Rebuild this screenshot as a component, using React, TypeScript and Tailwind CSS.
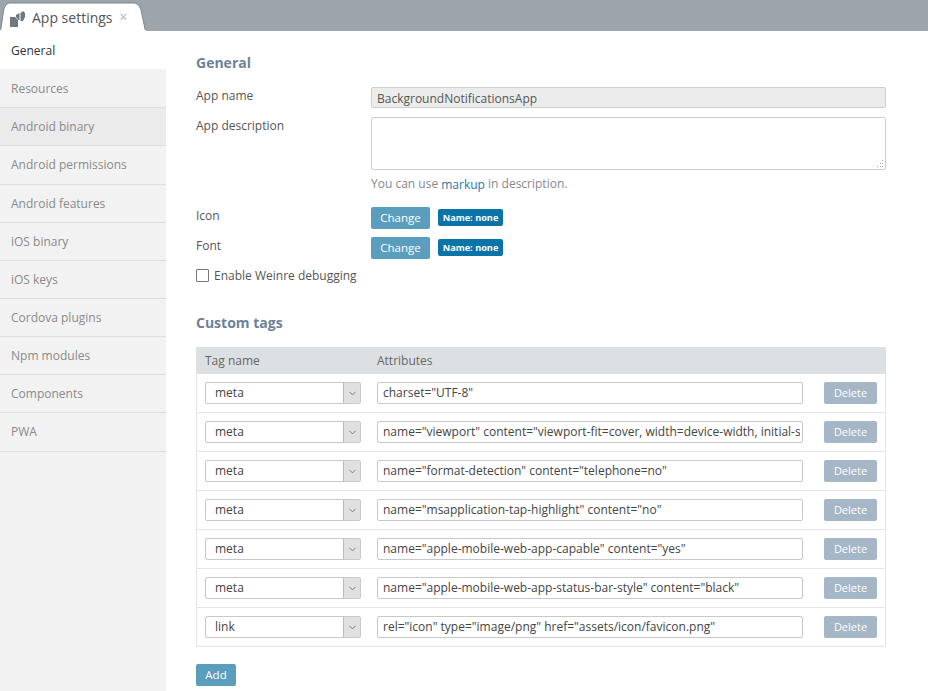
import { ChevronDown } from "lucide-react";

const navItems = [
  "Resources",
  "Android binary",
  "Android permissions",
  "Android features",
  "iOS binary",
  "iOS keys",
  "Cordova plugins",
  "Npm modules",
  "Components",
  "PWA",
];

const tags = [
  { tag: "meta", attrs: 'charset="UTF-8"' },
  { tag: "meta", attrs: 'name="viewport" content="viewport-fit=cover, width=device-width, initial-s' },
  { tag: "meta", attrs: 'name="format-detection" content="telephone=no"' },
  { tag: "meta", attrs: 'name="msapplication-tap-highlight" content="no"' },
  { tag: "meta", attrs: 'name="apple-mobile-web-app-capable" content="yes"' },
  { tag: "meta", attrs: 'name="apple-mobile-web-app-status-bar-style" content="black"' },
  { tag: "link", attrs: 'rel="icon" type="image/png" href="assets/icon/favicon.png"' },
];

function ChangeRow({ label }: { label: string }) {
  return (
    <div className="flex h-[30px] items-start">
      <div className="w-[175px] leading-[18px]">{label}</div>
      <button type="button" className="h-[22px] w-[59px] rounded-[2px] bg-[#5b9dbd] text-center text-[11.5px] leading-[22px] text-white">
        Change
      </button>
      <span className="ml-2 mt-[2px] h-[17px] w-[65px] rounded-[2px] bg-[#0a73a8] text-center text-[9.2px] font-bold leading-[17px] text-white">
        Name: none
      </span>
    </div>
  );
}

function TagRow({ tag, attrs }: { tag: string; attrs: string }) {
  return (
    <div className="flex h-[39px] items-center border-b border-[#e2e5e7] pl-2 pr-2">
      <div className="flex h-[22px] w-[156px] overflow-hidden rounded-[2px] border border-[#c8c8c8]">
        <div className="flex-1 pl-[9px] text-[12px] leading-[20px] text-[#444]">{tag}</div>
        <div className="flex w-[17px] items-center justify-center border-l border-[#bbbbbb] bg-[#e0e0e0]">
          <ChevronDown size={11} strokeWidth={1.75} className="text-[#666]" />
        </div>
      </div>
      <div className="ml-4 h-[22px] w-[426px] overflow-hidden whitespace-nowrap rounded-[2px] border border-[#c8c8c8] pl-[5px] pr-[2px] text-[12px] leading-[20px] text-[#444]">
        <div className="overflow-hidden">{attrs}</div>
      </div>
      <button type="button" className="ml-[21px] h-[22px] w-[53px] rounded-[2px] bg-[#a5b6c6] text-center text-[11px] leading-[22px] text-white">
        Delete
      </button>
    </div>
  );
}

export default function App() {
  return (
    <div className="flex h-[691px] w-[928px] flex-col overflow-hidden bg-white font-['Open_Sans',sans-serif] text-[12px] text-[#555]">
      <div className="relative h-[31px] shrink-0 bg-[#9da4ab]">
        <div className="absolute bottom-0 left-0 flex h-[29px] w-[146px] items-center">
          <svg className="absolute inset-0" width="146" height="29" viewBox="0 0 146 29">
            <path d="M0.500 29 L3.500 9 C4.500 3 7 1 11 1 L133 1 C137.500 1 139 3 141 8 L145.500 29 Z" fill="#fff" stroke="#7b838a" strokeWidth="1" />
            <path d="M0 29 H146" stroke="#fff" strokeWidth="2" />
          </svg>
          <svg className="relative ml-[10px] mt-[4px]" width="15" height="16" viewBox="0 0 15 16" fill="#6f777f">
            <path d="M0 6 H5 L8 9 V16 H0 Z" />
            <path d="M6 4 L9.500 2 V9 H8.500 L6 6 Z" />
            <path d="M10.500 2 L13 0 L15 2 V6 L13 10 H10.500 Z" />
          </svg>
          <span className="relative ml-[7px] mt-[2px] text-[14px] text-[#555]">App settings</span>
          <span className="relative ml-[7px] mt-[1px] text-[14px] leading-none text-[#b5b5b5]">×</span>
        </div>
      </div>

      <div className="flex flex-1">
        <nav className="w-[166px] shrink-0 bg-[#f2f2f2]">
          <div className="h-[38px] bg-white pl-[11px] leading-[40px] text-[#333]">General</div>
          {navItems.map((item, i) => (
            <div
              key={item}
              className={`border-b border-[#dedede] pl-[11px] text-[#8a8a8a] ${i === 0 ? "h-[39.32px] leading-[40px]" : "h-[38.15px] leading-[38.6px]"} ${item === "Android binary" ? "bg-[#ebebeb]" : ""}`}
            >
              {item}
            </div>
          ))}
        </nav>

        <main className="box-content w-[690px] pl-[30px]">
          <h2 className="mt-[22px] text-[14px] font-bold leading-[20px] text-[#6c8299]">General</h2>

          <div className="mt-[14px] flex h-[30px] items-start">
            <div className="w-[175px] leading-[18px]">App name</div>
            <div className="h-[21px] w-[515px] rounded-[2px] border border-[#cfcfcf] bg-[#ececec] pl-[5px] leading-[21px]">BackgroundNotificationsApp</div>
          </div>

          <div className="flex items-start">
            <div className="w-[175px] leading-[18px]">App description</div>
            <div>
              <div className="relative h-[53px] w-[515px] rounded-[2px] border border-[#cfcfcf]">
                <svg className="absolute bottom-[1px] right-[1px]" width="8" height="8" viewBox="0 0 8 8" fill="#aaa">
                  <rect x="6" y="0" width="1" height="1" />
                  <rect x="4" y="3" width="1" height="1" />
                  <rect x="6" y="3" width="1" height="1" />
                  <rect x="1" y="6" width="1" height="1" />
                  <rect x="4" y="6" width="1" height="1" />
                  <rect x="6" y="6" width="1" height="1" />
                </svg>
              </div>
              <div className="mt-[5px] h-[18px] leading-[18px] text-[#888]">
                You can use <a className="relative top-[1px] text-[#1f76a8]">markup</a> in description.
              </div>
            </div>
          </div>

          <div className="mt-[14px]">
            <ChangeRow label="Icon" />
            <ChangeRow label="Font" />
          </div>

          <label className="mt-[2px] flex h-[13px] items-center">
            <span className="h-[13px] w-[13px] rounded-[1px] border border-[#777] bg-white" />
            <span className="ml-[5px]">Enable Weinre debugging</span>
          </label>

          <h2 className="mt-[31px] text-[14px] font-bold leading-[20px] text-[#6c8299]">Custom tags</h2>

          <div className="mt-[14px] border-x border-[#e2e5e7]">
            <div className="-mx-px flex h-[27px] items-center bg-[#dde0e3] pl-[9px] text-[#666]">
              <div className="w-[172px]">Tag name</div>
              <div>Attributes</div>
            </div>
            {tags.map((row) => (
              <TagRow key={row.attrs} tag={row.tag} attrs={row.attrs} />
            ))}
          </div>

          <button type="button" className="mt-[17px] h-[22px] w-[40px] rounded-[2px] bg-[#5b9dbd] text-center text-[11.5px] leading-[22px] text-white">
            Add
          </button>
        </main>
      </div>
    </div>
  );
}
